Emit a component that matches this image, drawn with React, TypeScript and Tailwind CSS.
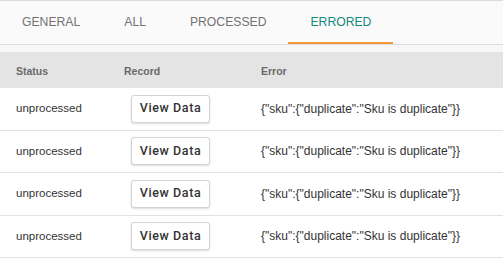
const tabs = ["GENERAL", "ALL", "PROCESSED", "ERRORED"];

const rows = [1, 2, 3, 4].map((id) => ({
  id,
  status: "unprocessed",
  error: '{"sku":{"duplicate":"Sku is duplicate"}}',
}));

const App = () => {
  const active = "ERRORED";
  return (
    <div className="w-[503px] h-[261px] bg-white overflow-hidden font-['Liberation_Sans',Arial,sans-serif]">
      <div className="border-t border-[#dcdcdc] border-b bg-[#fafafa] flex h-[45px]">
        {tabs.map((tab) => (
          <div
            key={tab}
            className={`px-[22px] h-full flex items-center text-[12.2px] border-b-2 ${
              tab === active
                ? "text-[#12897a] border-[#f7993a]"
                : "text-[#727272] border-transparent"
            }`}
          >
            <span className="pt-[2px]">{tab}</span>
          </div>
        ))}
      </div>
      <div className="h-[7px] bg-[#f7f7f7]"></div>
      <div className="grid grid-cols-[108px_137px_1fr] pl-[16px] pt-[4px] h-[36px] items-center bg-[#e4e4e4] text-[10.5px] font-bold text-[#6a6a6a]">
        <div>Status</div>
        <div>Record</div>
        <div>Error</div>
      </div>
      {rows.map((row) => (
        <div
          key={row.id}
          className="grid grid-cols-[108px_137px_1fr] pl-[16px] h-[42.5px] items-center border-b border-[#e2e2e2] text-[11.5px] text-[#333]"
        >
          <div>{row.status}</div>
          <div>
            <button className="ml-[7px] w-[79px] h-[28px] bg-white border border-[#d4d4d4] rounded-[3px] shadow-[0_1px_2px_rgba(0,0,0,0.15)] font-['Roboto',sans-serif] text-[12.5px] font-medium tracking-[0.6px] text-[#333]">
              View Data
            </button>
          </div>
          <div className="text-[12px]">{row.error}</div>
        </div>
      ))}
    </div>
  );
};

export default App;
